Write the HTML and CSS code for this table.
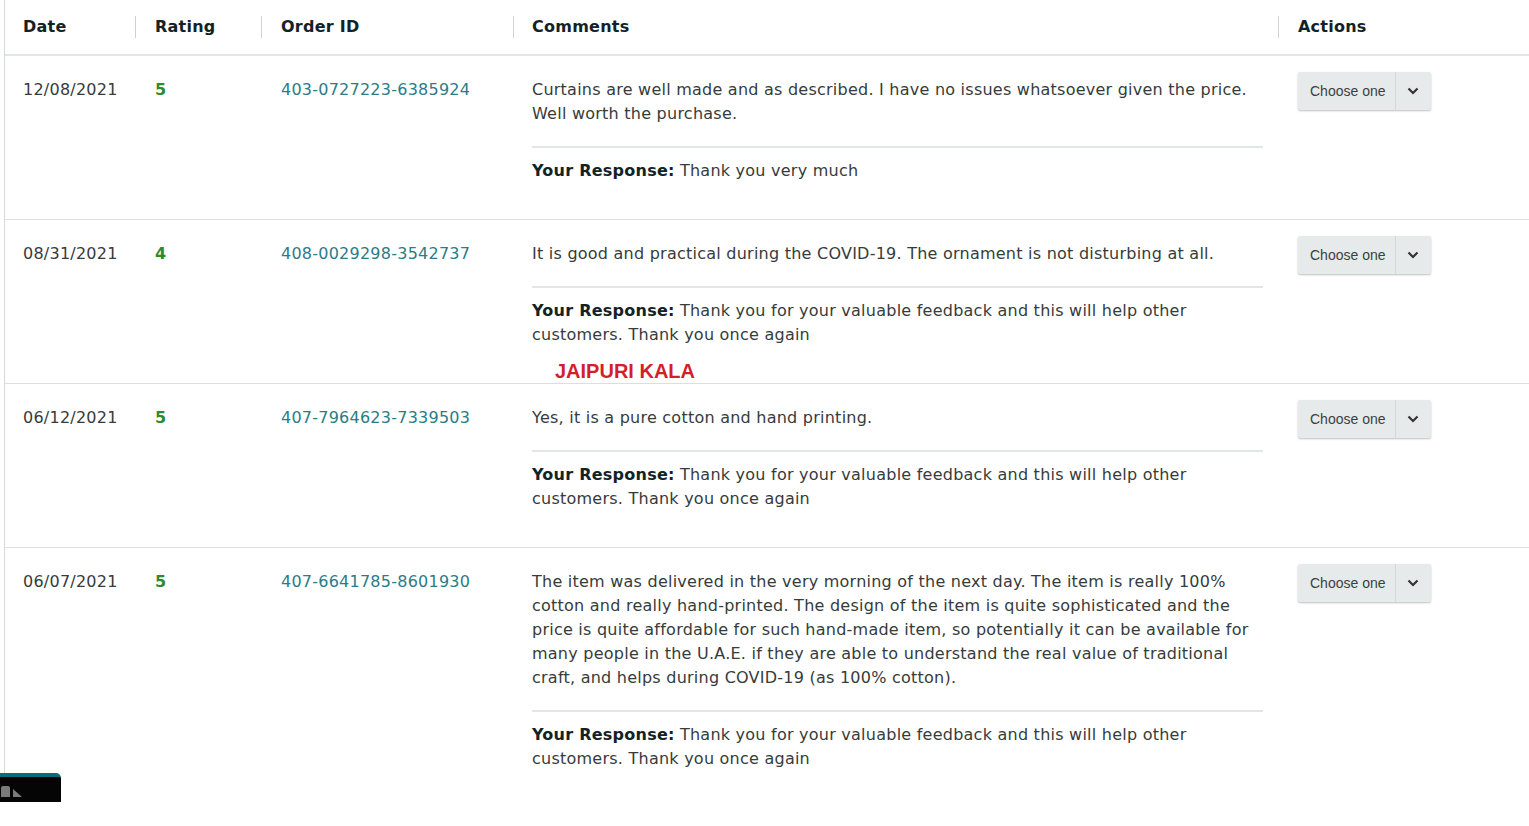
FILE: index.html
```html
<!DOCTYPE html>
<html>
<head>
<meta charset="utf-8">
<link rel="stylesheet" href="styles.css">
</head>
<body>
<div class="page">
  <div class="table">
    <div class="row head">
      <div class="cell c-date">Date</div>
      <div class="cell c-rating sep">Rating</div>
      <div class="cell c-order sep">Order ID</div>
      <div class="cell c-comments sep">Comments</div>
      <div class="cell c-actions sep">Actions</div>
    </div>

    <div class="row">
      <div class="cell c-date">12/08/2021</div>
      <div class="cell c-rating"><span class="rating">5</span></div>
      <div class="cell c-order"><a class="order">403-0727223-6385924</a></div>
      <div class="cell c-comments">
        <p class="comment">Curtains are well made and as described. I have no issues whatsoever given the price. Well worth the purchase.</p>
        <p class="response"><b>Your Response:</b> Thank you very much</p>
      </div>
      <div class="cell c-actions"><div class="dropdown"><span class="dd-label">Choose one</span><span class="dd-arrow"><svg width="12" height="8" viewBox="0 0 12 8"><path d="M1.5 1.5 L6 6 L10.5 1.5" fill="none" stroke="#333" stroke-width="2.2"/></svg></span></div></div>
    </div>

    <div class="row">
      <div class="cell c-date">08/31/2021</div>
      <div class="cell c-rating"><span class="rating">4</span></div>
      <div class="cell c-order"><a class="order">408-0029298-3542737</a></div>
      <div class="cell c-comments">
        <p class="comment">It is good and practical during the COVID-19. The ornament is not disturbing at all.</p>
        <p class="response"><b>Your Response:</b> Thank you for your valuable feedback and this will help other customers. Thank you once again</p>
      </div>
      <div class="cell c-actions"><div class="dropdown"><span class="dd-label">Choose one</span><span class="dd-arrow"><svg width="12" height="8" viewBox="0 0 12 8"><path d="M1.5 1.5 L6 6 L10.5 1.5" fill="none" stroke="#333" stroke-width="2.2"/></svg></span></div></div>
    </div>

    <div class="row">
      <div class="cell c-date">06/12/2021</div>
      <div class="cell c-rating"><span class="rating">5</span></div>
      <div class="cell c-order"><a class="order">407-7964623-7339503</a></div>
      <div class="cell c-comments">
        <p class="comment">Yes, it is a pure cotton and hand printing.</p>
        <p class="response"><b>Your Response:</b> Thank you for your valuable feedback and this will help other customers. Thank you once again</p>
      </div>
      <div class="cell c-actions"><div class="dropdown"><span class="dd-label">Choose one</span><span class="dd-arrow"><svg width="12" height="8" viewBox="0 0 12 8"><path d="M1.5 1.5 L6 6 L10.5 1.5" fill="none" stroke="#333" stroke-width="2.2"/></svg></span></div></div>
    </div>

    <div class="row">
      <div class="cell c-date">06/07/2021</div>
      <div class="cell c-rating"><span class="rating">5</span></div>
      <div class="cell c-order"><a class="order">407-6641785-8601930</a></div>
      <div class="cell c-comments">
        <p class="comment">The item was delivered in the very morning of the next day. The item is really 100% cotton and really hand-printed. The design of the item is quite sophisticated and the price is quite affordable for such hand-made item, so potentially it can be available for many people in the U.A.E. if they are able to understand the real value of traditional craft, and helps during COVID-19 (as 100% cotton).</p>
        <p class="response"><b>Your Response:</b> Thank you for your valuable feedback and this will help other customers. Thank you once again</p>
      </div>
      <div class="cell c-actions"><div class="dropdown"><span class="dd-label">Choose one</span><span class="dd-arrow"><svg width="12" height="8" viewBox="0 0 12 8"><path d="M1.5 1.5 L6 6 L10.5 1.5" fill="none" stroke="#333" stroke-width="2.2"/></svg></span></div></div>
    </div>
  </div>

  <div class="watermark">JAIPURI KALA</div>

  <div class="dock">
    <span class="dock-icon a"></span>
    <span class="dock-icon b"></span>
  </div>
</div>
</body>
</html>
```

FILE: styles.css
```css
* { box-sizing: border-box; }
html, body { margin: 0; padding: 0; background: #fff; }
body {
  font-family: "DejaVu Sans", Verdana, sans-serif;
  font-size: 16px;
  letter-spacing: 0.24px;
  color: #363b3c;
  width: 1529px;
  height: 826px;
  overflow: hidden;
}
.page {
  position: relative;
  height: 826px;
}
.table {
  margin-left: 4px;
  border-left: 1px solid #d5d9d9;
  height: 773px;
  overflow: hidden;
}
.row {
  display: grid;
  grid-template-columns: 130px 126px 252px 765px 1fr;
  border-bottom: 1px solid #dcdfdf;
  padding: 22px 0 36px;
  line-height: 24px;
}
.row.head {
  padding: 0 0 1px;
  height: 56px;
  align-items: center;
  border-bottom: 2px solid #e3e6e6;
  font-weight: bold;
  color: #132226;
}
.cell { padding-left: 20px; }
.cell.c-date { padding-left: 18px; }
.head .cell { position: relative; }
.head .sep::before {
  content: "";
  position: absolute;
  left: 0;
  top: 50%;
  margin-top: -11px;
  height: 22px;
  width: 1px;
  background: #cfd3d3;
}
.c-comments { padding-right: 15px; padding-left: 19px; }
.rating { color: #2e8a2e; font-weight: bold; }
.order { color: #2b7c87; text-decoration: none; }
.comment {
  margin: 0;
  padding-bottom: 20px;
  border-bottom: 2px solid #e3e6e6;
}
.response { margin: 11px 0 0; }
.response b { color: #132226; }
.dropdown {
  margin-top: -6px;
  display: inline-flex;
  height: 38px;
  background: #e6eaea;
  border-radius: 2px;
  box-shadow: 0 1px 2px rgba(0,0,0,0.25);
  font-family: "Liberation Sans", Arial, sans-serif;
  font-size: 14px;
  letter-spacing: 0;
  color: #3a3f40;
  align-items: stretch;
}
.dd-label {
  display: flex;
  align-items: center;
  padding: 0 9px 0 12px;
  border-right: 1px solid #d3d7d7;
}
.dd-arrow {
  display: flex;
  align-items: center;
  justify-content: center;
  width: 35px;
}
.watermark {
  position: absolute;
  left: 555px;
  top: 359px;
  font-family: "Liberation Sans", Arial, sans-serif;
  font-weight: bold;
  font-size: 20px;
  line-height: 24px;
  letter-spacing: 0;
  color: #d21f2b;
}
.dock {
  position: absolute;
  left: 0;
  top: 773px;
  width: 61px;
  height: 29px;
  background: #050505;
  border-top: 4px solid #0c6b7a;
  border-top-right-radius: 5px;
}
.dock-icon {
  position: absolute;
  top: 9px;
  background: #7a7a7a;
}
.dock-icon.a { left: 1px; width: 9px; height: 11px; border-radius: 2px 2px 0 0; }
.dock-icon.b {
  left: 13px;
  top: 12px;
  width: 0; height: 0;
  background: transparent;
  border-left: 9px solid transparent;
  border-bottom: 8px solid #7a7a7a;
  transform: scaleX(-1);
}
```
